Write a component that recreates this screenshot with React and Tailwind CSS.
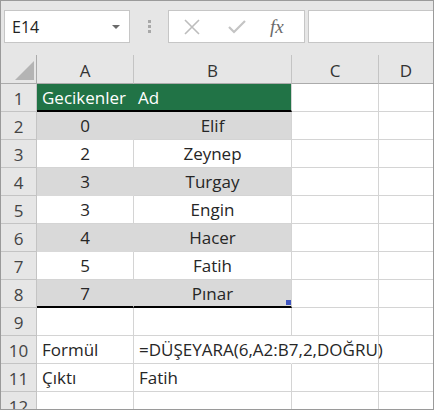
import React from "react";

const FONT = { fontFamily: '"Open Sans", "Noto Sans", "Liberation Sans", sans-serif' };

const ROWS = [
  { a: "Gecikenler", b: "Ad", kind: "head" },
  { a: "0", b: "Elif", kind: "band" },
  { a: "2", b: "Zeynep", kind: "plain" },
  { a: "3", b: "Turgay", kind: "band" },
  { a: "3", b: "Engin", kind: "plain" },
  { a: "4", b: "Hacer", kind: "band" },
  { a: "5", b: "Fatih", kind: "plain" },
  { a: "7", b: "Pınar", kind: "last" },
  { a: "", b: "", kind: "free" },
  { a: "Formül", b: "=DÜŞEYARA(6,A2:B7,2,DOĞRU)", kind: "free", spill: true },
  { a: "Çıktı", b: "Fatih", kind: "free" },
  { a: "", b: "", kind: "free" },
];

function RowCells({ row, n }) {
  const band = row.kind === "band" || row.kind === "last";
  const head = row.kind === "head";
  const table = row.kind !== "free";

  let aCls = "flex items-center border-b border-r border-[#d4d4d4] ";
  let bCls = "relative flex items-center border-b border-r border-[#d4d4d4] ";
  if (head) {
    aCls = "flex items-center bg-[#217346] text-white pl-[5px] border-b-2 border-black whitespace-nowrap";
    bCls = "relative flex items-center bg-[#217346] text-white pl-[4px] border-b-2 border-black border-r border-r-[#d4d4d4]";
  } else if (table) {
    aCls += "justify-center text-[#262626] ";
    bCls += "justify-center text-[#262626] ";
    if (band) {
      aCls += "bg-[#d9d9d9] border-r-[#d9d9d9] border-b-[#d9d9d9] ";
      bCls += "bg-[#d9d9d9] ";
    }
    if (row.kind === "last") {
      aCls += "border-b-2 border-b-black";
      bCls += "border-b-2 border-b-black";
    }
  } else {
    aCls += "pl-[5px] text-[#262626]";
    bCls += "pl-[5px] text-[#262626] overflow-visible whitespace-nowrap z-10 ";
    if (row.spill) bCls += "border-r-transparent";
  }

  return (
    <>
      <div className="flex items-center justify-center bg-[#e6e6e6] border-r border-b border-[#c4c4c4] text-[#444] overflow-hidden">
        <span className="pt-[1px]">{n}</span>
      </div>
      <div className={aCls}>{row.a}</div>
      <div className={bCls}>
        <span className={row.spill ? "absolute left-[5px]" : ""}>{row.b}</span>
        {row.kind === "last" && (
          <span className="absolute right-0 bottom-[1px] w-[5px] h-[5px] bg-[#3f55c0]" />
        )}
      </div>
      <div className="border-r border-b border-[#d4d4d4]" />
      <div className="border-b border-[#d4d4d4]" />
    </>
  );
}

export default function App() {
  return (
    <div
      className="w-[434px] h-[410px] border border-[#9a9a9a] bg-white overflow-hidden text-[17px] leading-none"
      style={FONT}
    >
      {/* formül çubuğu */}
      <div className="h-[54px] bg-[#e6e6e6] flex items-start pt-[9px] pl-[3px]">
        <div className="w-[126px] h-[33px] bg-white border border-[#c6c6c6] flex items-center justify-between pl-[7px] pr-[9px] text-[#222] text-[16px]">
          <span>E14</span>
          <svg width="8" height="4" viewBox="0 0 8 4">
            <polygon points="0,0 8,0 4,4" fill="#6a6a6a" />
          </svg>
        </div>
        <div className="w-[38px] h-[33px] flex flex-col items-center justify-center gap-[2px]">
          <span className="w-[3px] h-[3px] bg-[#a8a8a8]" />
          <span className="w-[3px] h-[3px] bg-[#a8a8a8]" />
          <span className="w-[3px] h-[3px] bg-[#a8a8a8]" />
        </div>
        <div className="w-[137px] h-[33px] bg-white border border-[#c6c6c6] flex items-center">
          <svg className="ml-[15px]" width="16" height="16" viewBox="0 0 16 16">
            <path d="M1 1 L15 15 M15 1 L1 15" stroke="#bdbdbd" strokeWidth="1.6" fill="none" />
          </svg>
          <svg className="ml-[28px]" width="18" height="14" viewBox="0 0 18 14">
            <path d="M1 7 L6 12 L17 1" stroke="#c4c4c4" strokeWidth="2.2" fill="none" />
          </svg>
          <span
            className="ml-[24px] italic text-[19px] text-[#6a6a6a]"
            style={{ fontFamily: '"Liberation Serif", serif' }}
          >
            fx
          </span>
        </div>
        <div className="flex-1 ml-[3px] h-[33px] bg-white border border-r-0 border-[#c6c6c6]" />
      </div>

      {/* tablo */}
      <div className="grid grid-cols-[36px_97px_158px_87px_1fr] grid-rows-[29px_repeat(12,28px)]">
        <div className="bg-[#e6e6e6] border-r border-b border-[#ababab] relative">
          <svg className="absolute left-[14px] top-[6px]" width="19" height="19" viewBox="0 0 19 19">
            <polygon points="0,19 19,19 19,0" fill="#b4b4b4" />
          </svg>
        </div>
        {["A", "B", "C", "D"].map((c, i) => (
          <div
            key={c}
            className={
              "bg-[#e6e6e6] border-b border-[#ababab] flex items-center justify-center text-[#333] " +
              (i < 3 ? "border-r border-r-[#c4c4c4]" : "")
            }
          >
            <span className="pt-[2px]">{c}</span>
          </div>
        ))}
        {ROWS.map((r, i) => (
          <RowCells key={i} row={r} n={i + 1} />
        ))}
      </div>
    </div>
  );
}
